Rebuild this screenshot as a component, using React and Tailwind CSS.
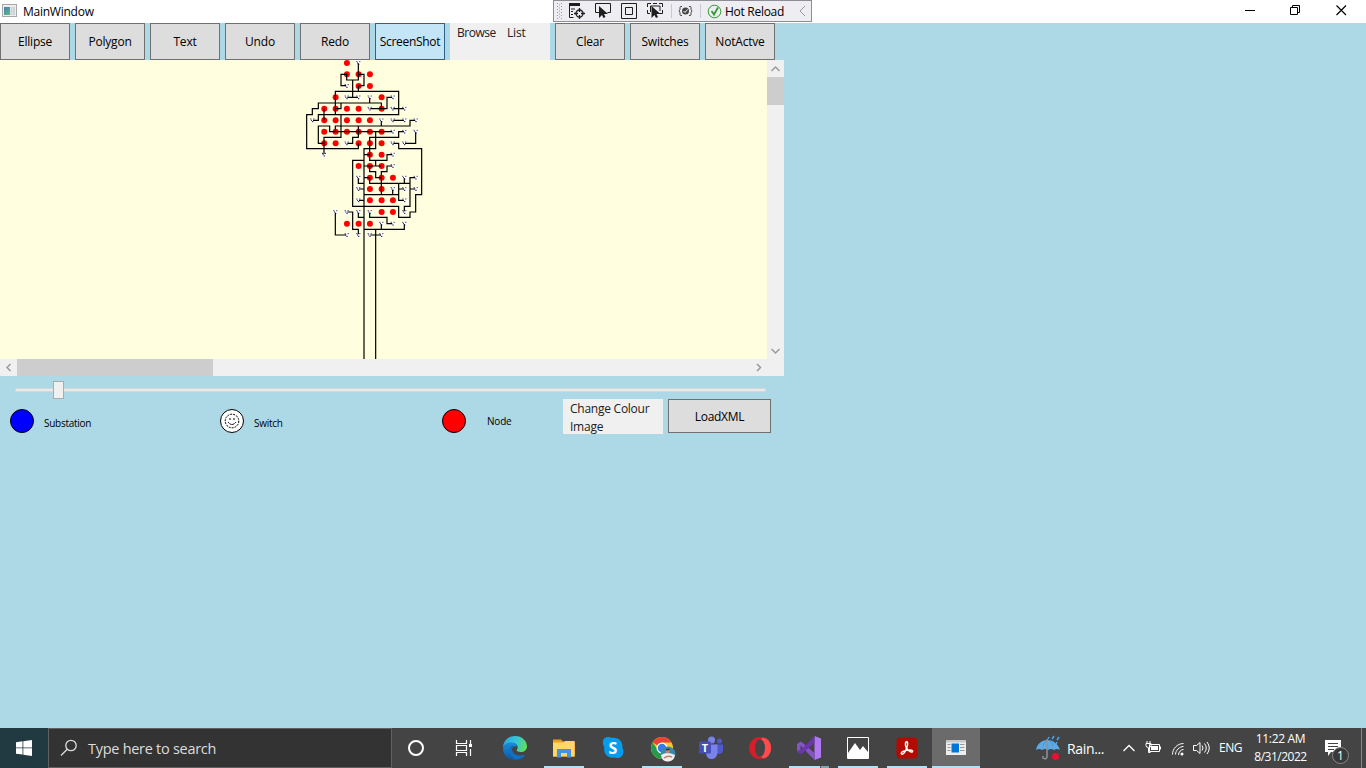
import React from "react";

const nodeRows = [
  [15, [155]],
  [49, [155, 190, 224]],
  [84, [190, 224]],
  [118, [121, 259]],
  [152, [87, 121, 155, 190, 259]],
  [187, [87, 121, 155, 190, 224]],
  [221, [87, 121, 155, 190, 224, 259]],
  [256, [87, 121, 190, 224, 259]],
  [290, [224, 259]],
  [324, [190, 224, 259]],
  [359, [224, 259, 293]],
  [393, [224, 259]],
  [427, [224, 259, 293]],
  [462, [259, 293]],
  [497, [155, 190, 224]],
];

const terminals = [
  [190, 15], [155, 84], [155, 118], [190, 118], [224, 118], [293, 118],
  [224, 152], [293, 152], [328, 152], [52, 187], [259, 187], [293, 187],
  [328, 187], [362, 187], [293, 221], [328, 221], [362, 221], [155, 256],
  [293, 256], [328, 256], [87, 290], [293, 290], [293, 324], [190, 359],
  [328, 359], [362, 359], [190, 393], [293, 393], [328, 393], [362, 393],
  [190, 427], [328, 427], [121, 462], [155, 462], [190, 462], [224, 462],
  [328, 462], [259, 497], [293, 497], [328, 497], [155, 531], [190, 531],
  [224, 531], [259, 531],
];

const wires = [
  "M190 16V66H155V49H138V83H153", "M190 49H207V83H190", "M173 66V118M157 118H188",
  "M190 84V100", "M121 170V100H311V170H70V187H54", "M224 120V135H70V152H52V170H35V272H190V256",
  "M121 152H138V135H259V152", "M87 152V187", "M226 152H276V118H291", "M295 152H326",
  "M295 187H326", "M360 187H345V204H121V221", "M259 189V204",
  "M87 256H70V204H104V221H291", "M138 170V238H87V288", "M190 204V238H173V256H157",
  "M326 221H311V238H224V290", "M362 223V256H330",
  "M295 256H311V272H380V410H362V462H345V478H311V445H173V307H207",
  "M242 221V272H207V903", "M207 290H224V307H242V324", "M291 290H276V307H242",
  "M207 324H259", "M224 324V341H242V359H259M291 324H276V341H259V410H293V395",
  "M190 361V376H207M207 359H224V376H345",
  "M328 361V376M360 359H345V393H360", "M345 376V445H328V460",
  "M311 376V427H326M311 393H326", "M207 410H311", "M192 393H207M192 427H207",
  "M121 464V531H153", "M157 462H173V514H190V529", "M190 464V478H207",
  "M224 464V478H276V497H291", "M207 514H328V499M259 499V514M242 514V903", "M226 531H257",
];

function Diagram() {
  return (
    <svg width="767" height="299" viewBox="0 60 767 299" className="block">
      <g transform="translate(295 58) scale(0.33333)">
        {terminals.map(([x, y]) => (
          <g key={`${x}-${y}`}>
            <circle cx={x} cy={y} r="8" fill="#fff" />
            <path d={`M${x - 6} ${y - 4}h3M${x + 3} ${y - 4}h3M${x - 4} ${y}h3M${x - 1} ${y + 4}h4`} stroke="#101030" strokeWidth="3" />
          </g>
        ))}
        {nodeRows.map(([y, xs]) => xs.map((x) => <circle key={`${x}-${y}`} cx={x + 0.8} cy={y} r="9" fill="#f00" />))}
        <path d={wires.join("")} fill="none" stroke="#000" strokeWidth="3.6" />
      </g>
    </svg>
  );
}

function Button({ children, active = false }) {
  return (
    <div
      className={`flex h-[37px] w-[70px] shrink-0 items-center justify-center border pt-px whitespace-nowrap ${
        active ? "border-[#2c628b] bg-[#c4e5f6] tracking-[-0.3px]" : "border-[#707070] bg-[#ddd]"
      }`}
    >
      {children}
    </div>
  );
}

function Chevron({ d }) {
  return (
    <svg width="17" height="17" viewBox="0 0 17 17" fill="none" stroke="#9a9a9a" strokeWidth="1.5" className="shrink-0">
      <path d={d} />
    </svg>
  );
}

function DebugBar() {
  return (
    <div className="flex h-[22px] w-[259px] shrink-0 items-center border border-[#8e8c94] bg-[#eeedf2]">
      <svg width="170" height="20" viewBox="554 1 170 20" fill="none" stroke="#1e1e1e" className="shrink-0">
        <path d="M557.5 3v17M561.5 3v17" stroke="#999" strokeDasharray="1 2" />
        <path d="M559.5 4.5v15" stroke="#999" strokeDasharray="1 2" />
        <path d="M569 3h11v3h-11z" fill="#1e1e1e" stroke="none" />
        <path d="M569.5 5v12.5h4M571 9h4M571 11.5h2M571 14.5h2" />
        <circle cx="579.5" cy="13.5" r="3.5" strokeWidth="1.3" />
        <path d="M579.5 8v4M579.5 15v4M574 13.5h4M581 13.5h4" strokeWidth="1.3" />
        <path d="M599 12.5h-3.500v-9h15v9h-3" />
        <path d="M599 6v12l3-3 1.500 3 2-1-1.500-3h4z" fill="#1e1e1e" stroke="none" />
        <path d="M621.500 3.500h15v15h-15zM625.500 7.500h7v7h-7z" />
        <path d="M647.500 7V3.500H651M659 3.500h3.500V7M647.500 10v3.500H650M662.500 10v3.500H659M650.500 12V6h9.500v5M653 3.500h4" />
        <path d="M651.500 6v12l3-3 1.500 3 2-1-1.500-3h4z" fill="#1e1e1e" stroke="none" />
        <path d="M671.500 4v14M700.500 4v14" stroke="#c7c8d8" />
        <path d="M682 6.500h-1q-1 0-1 1v2l-1 1.500 1 1.500v2q0 1 1 1h1M689 6.500h1q1 0 1 1v2l1 1.500-1 1.500v2q0 1-1 1h-1" stroke="#444" />
        <circle cx="685.500" cy="11" r="3.500" fill="#444" stroke="none" />
        <path d="M683.500 11l1.500 1.500 2.500-3" stroke="#fff" />
        <circle cx="714.500" cy="11.500" r="6.300" stroke="#339933" />
        <path d="M711.500 11l2.500 3.500 4-7" stroke="#339933" strokeWidth="1.800" />
      </svg>
      <span className="mt-[2px] ml-[1px] w-[60px] whitespace-nowrap text-[12px] tracking-[-0.28px]">Hot Reload</span>
      <svg width="10" height="12" viewBox="0 0 10 12" fill="none" stroke="#999" className="ml-[13px]">
        <path d="M7 1L2 6l5 5" />
      </svg>
    </div>
  );
}

function TitleBar() {
  return (
    <header className="flex h-[23px] bg-white text-[12px]">
      <svg width="16" height="16" viewBox="0 0 16 16" className="mt-[3px] ml-[2px] shrink-0">
        <defs>
          <linearGradient id="win" x2="0.700" y2="1">
            <stop stopColor="#4b7fb0" />
            <stop offset="1" stopColor="#55b58c" />
          </linearGradient>
        </defs>
        <rect x="0.500" y="1.500" width="14" height="12" fill="#eee" stroke="#a8a8a8" />
        <rect x="2" y="4" width="6" height="8" fill="url(#win)" />
        <path d="M9.500 4v8M12 4v8" stroke="#ccd3d8" strokeWidth="2" />
      </svg>
      <span className="mt-[4px] ml-[5px] w-[530px] tracking-[-0.25px]">MainWindow</span>
      <DebugBar />
      <svg width="554" height="22" viewBox="812 0 554 22" fill="none" stroke="#000" className="shrink-0">
        <path d="M1245 10.500h10" />
        <path d="M1290.500 7.500h7v7h-7zM1292.500 7V5.500h7v7H1298" />
        <path d="M1336.500 5.500l9.500 9.500M1346 5.500l-9.500 9.500" strokeWidth="1.200" />
      </svg>
    </header>
  );
}

function TaskSlot({ children, width, bar }) {
  return (
    <div className={`flex h-10 shrink-0 flex-col items-center ${width} ${bar === "active" ? "bg-[#6b6b6b]" : ""}`}>
      <div className="flex h-[38px] items-center">{children}</div>
      {bar && (
        <div className={`flex h-[2px] justify-end bg-[#aee2fb] ${bar === "active" ? "w-12" : "w-10"}`}>
          {bar === "stacked" && <div className="w-[9px] border-l border-[#555] bg-[#82a6b8]" />}
        </div>
      )}
    </div>
  );
}

function Icon({ children }) {
  return (
    <svg width="24" height="24" viewBox="0 0 24 24" fill="none" className="mt-[2px]">
      {children}
    </svg>
  );
}

function Taskbar() {
  return (
    <footer className="flex h-10 bg-[#444] font-['Open_Sans',sans-serif] text-white">
      <div className="flex w-12 shrink-0 items-center justify-center bg-[#213a42]">
        <svg width="16" height="16" viewBox="0 0 16 16" fill="#fff">
          <path d="M0 2.200L6.500 1.300V7.500H0zM7.300 1.200L16 0v7.500H7.300zM0 8.300h6.500v6.300L0 13.700zM7.300 8.300H16V16l-8.700-1.300z" />
        </svg>
      </div>
      <div className="flex w-[344px] shrink-0 items-center border border-[#606060] bg-[#333]">
        <svg width="18" height="18" viewBox="0 0 18 18" fill="none" stroke="#ddd" strokeWidth="1.300" className="ml-[11px]">
          <circle cx="11" cy="6.500" r="5.200" />
          <path d="M7.200 10.300L1 16.500" />
        </svg>
        <span className="mt-[2px] ml-[10px] whitespace-nowrap text-[14.500px] tracking-[-0.28px] text-[#ddd]">Type here to search</span>
      </div>
      <TaskSlot width="w-12">
        <Icon><circle cx="12" cy="12" r="7" stroke="#fff" strokeWidth="2" /></Icon>
      </TaskSlot>
      <TaskSlot width="w-12">
        <Icon>
          <path d="M4.500 4v3.500h10V4M4.500 20v-3.500h10V20M4.500 9.500h10v5h-10zM18.500 4v4M18.500 13v7" stroke="#fff" strokeWidth="1.200" />
          <path d="M17 8h3v3h-3z" fill="#fff" />
        </Icon>
      </TaskSlot>
      <TaskSlot width="w-[54px]">
        <Icon>
          <defs>
            <linearGradient id="edge" x1="0" y1="0.200" x2="1" y2="0.400">
              <stop stopColor="#2aa5e4" /><stop offset="0.550" stopColor="#35c5d8" /><stop offset="1" stopColor="#5de05c" />
            </linearGradient>
            <linearGradient id="edgeb" x2="0" y2="1">
              <stop stopColor="#198ddd" /><stop offset="1" stopColor="#0d59a7" />
            </linearGradient>
          </defs>
          <path d="M0 12C0 5 5 0 12 0s12 5 12 10.500c0 3.500-3 5.500-6 5.500-3.500 0-5-1.200-4-2.500 1.800-3 0-6.500-5-6.500C4 7 1 9 0 12z" fill="url(#edge)" />
          <path d="M0 12c1-4 5-6 9-5.500 3 .3 5 2 5.500 4-4-1-6 1-5.500 4 .5 4 6 6 11 4.500l2 .500c-2 3-6 4.500-10 4.500C5 24 0 19 0 12z" fill="url(#edgeb)" />
          <path d="M7.500 10.500c-3 6 1 12 6.500 13 3-.3 6-2 8-4.500-5 2-12 0-13-5 0-1.500-.5-2.500 2-4-1-.5-2.500-.3-3.500.5z" fill="#1270bf" />
        </Icon>
      </TaskSlot>
      <TaskSlot width="w-[44px]" bar="open">
        <Icon>
          <path d="M1 3.500h8l2 2h12v15H1z" fill="#e8a312" />
          <path d="M1 6.500h10l2-1.500h9.500v15.500H1z" fill="#ffd668" />
          <path d="M5 21.500V13h14v8.500h-4V17H9v4.500z" fill="#4194dd" />
        </Icon>
      </TaskSlot>
      <TaskSlot width="w-[54px]">
        <Icon>
          <path d="M7 1c2 0 3 .5 4 1 7-1 11 4 10.500 10 1 1.500 1 3 .8 4.500-.5 5-5 6.500-9 5-7 1-11-4-10-10C.5 6 2 1 7 1z" fill="#079ce9" />
          <text x="12" y="17.500" textAnchor="middle" fill="#fff" fontFamily="Open Sans" fontSize="16" fontWeight="700">S</text>
        </Icon>
      </TaskSlot>
      <TaskSlot width="w-[44px]" bar="open">
        <svg width="26" height="26" viewBox="0 0 26 26" className="mt-[4px] ml-[1px]">
          <circle cx="12" cy="12" r="11" fill="#f8c922" />
          <path d="M12 12L2.500 6.500A11 11 0 0 1 21.500 6.500H12z" fill="#ea4335" />
          <path d="M2.500 6.500A11 11 0 0 0 12 23l4-8-8-1z" fill="#249b4c" />
          <circle cx="12" cy="12" r="5.500" fill="#fff" /><circle cx="12" cy="12" r="4.300" fill="#3979e8" />
          <circle cx="18" cy="18" r="7.500" fill="#3c86a8" />
          <path d="M11 19q6-4 14 0-1 6-7 6.500T11 19z" fill="#eee" /><circle cx="17.500" cy="15" r="2.200" fill="#b88974" />
          <path d="M15.300 14.500q1-3 4.500-1.500v1z" fill="#30302e" />
          <path d="M14 22q4-3 8-1" stroke="#bb8067" strokeWidth="1.500" fill="none" />
        </svg>
      </TaskSlot>
      <TaskSlot width="w-[54px]">
        <Icon>
          <circle cx="12.500" cy="4" r="3.500" fill="#7b83eb" /><circle cx="20.500" cy="5" r="2.600" fill="#5059c9" />
          <path d="M15 8.500h9V15q-1 3-4 3t-5-3z" fill="#5059c9" /><path d="M7 8.500h11.500V17q-1 6-6 6t-5.500-6z" fill="#7b83eb" />
          <rect x="0" y="5.500" width="12" height="12" rx="1" fill="#464eb8" />
          <text x="6" y="15.500" textAnchor="middle" fill="#fff" fontFamily="Open Sans" fontSize="11" fontWeight="700">T</text>
        </Icon>
      </TaskSlot>
      <TaskSlot width="w-[44px]">
        <Icon>
          <ellipse cx="12" cy="12" rx="11" ry="11" fill="#d51e2a" />
          <path d="M15 1.500c10 1 11 18 1 21-4-1-6-4-6-10s2-9 5-11z" fill="#ff4b4b" />
          <ellipse cx="12" cy="12" rx="5" ry="8.800" fill="#444" />
        </Icon>
      </TaskSlot>
      <TaskSlot width="w-[54px]" bar="stacked">
        <Icon>
          <path d="M17.500 0L24 2.500v19L17.500 24z" fill="#b179f1" />
          <path d="M17.500 24v-7L4 5.500 0 8v8l3.500-1.500V9.500z" fill="#8654c5" />
          <path d="M17.500 0v7L4 18.500 0 16l1-2 2.500 .5z" fill="#6a35ad" />
        </Icon>
      </TaskSlot>
      <TaskSlot width="w-[44px]" bar="open">
        <Icon>
          <path d="M1.500 1.500h21v21h-21z" stroke="#fff" />
          <path d="M2 17l7-10 5 7 3-4 5 6v6H2z" fill="#fff" />
        </Icon>
      </TaskSlot>
      <TaskSlot width="w-[54px]" bar="open">
        <Icon>
          <rect x="1.500" y="1.500" width="21" height="21" rx="4" fill="#b30b00" />
          <path d="M11 6c2-1 2 2 1 5-1.500 5-4 8-5.500 7-1.500-1.500 3-4 8-4 4-.3 4 2.500 1.500 2-3.500-.8-7-7-5-10z" stroke="#fff" strokeWidth="1.400" />
        </Icon>
      </TaskSlot>
      <div className="-ml-[2px] shrink-0">
        <TaskSlot width="w-12" bar="active">
          <Icon>
            <path d="M2 4h20v15H2z" fill="#eee" /><path d="M2 4h20v2.500H2z" fill="#c8c8c8" />
            <path d="M7.500 7.500h7.500v9H7.500z" fill="#0076d7" />
            <path d="M3.500 8.500h3M3.500 11.500h3M3.500 14.500h3M16 8.500h4.500M16 11.500h4.500M16 14.500h4.500" stroke="#999" />
          </Icon>
        </TaskSlot>
      </div>
      <div className="ml-[55px] flex h-10 w-[78px] shrink-0 items-center">
        <svg width="26" height="26" viewBox="0 0 26 26" fill="none">
          <path d="M1 15C2 8 8 5 12.500 5S23 8 25 15q-3-2-6 0-3-2-6 0-3-2-6 0-3-2-6 0z" fill="#5ea8e4" />
          <path d="M7 15q1-8 5.500-10Q8 8 7 15zM19 15q-1-8-5.500-10Q18 8 19 15z" fill="#2b6aa9" />
          <path d="M12 4v18q-1 3-4 1v-2" stroke="#8b929b" strokeWidth="1.500" />
          <path d="M14 2l-1 2M19 1l-2 3M24 2l-2 3M22 7l-1 2" stroke="#4ba6ef" strokeWidth="1.500" />
          <circle cx="20.500" cy="21.500" r="3.500" fill="#e81135" />
        </svg>
        <span className="mt-[2px] ml-[6px] whitespace-nowrap text-[14px] tracking-[-0.35px]">Rain...</span>
      </div>
      <svg width="102" height="40" viewBox="1113 728 102 40" fill="none" stroke="#fff" className="shrink-0">
        <path d="M1123.500 751l5.500-5.500 5.500 5.500" strokeWidth="1.300" />
        <path d="M1149.500 744.500h10v7h-10zM1160.500 746.500v3M1146 743.500h5v2q0 2-2.500 2t-2.500-2zM1147 741v2M1150 741v2M1148.500 748v4.500h2" />
        <path d="M1151 746h7v4h-7z" fill="#fff" stroke="none" />
        <path d="M1172.500 754.500c0-6 5-11 11-11M1175.500 754.500c0-4 4-8 8-8M1178.500 755c0-3 2.500-5.500 5-5.500" />
        <circle cx="1182" cy="754" r="1.500" fill="#fff" stroke="none" />
        <path d="M1193.500 745.500h3l3.500-3v11l-3.500-3h-3zM1202 745.500q2 2.500 0 5M1204.500 743.500q3.500 4.500 0 9M1207 742q4.500 6 0 12" />
      </svg>
      <span className="mt-[11px] w-[30px] shrink-0 pl-1 text-[12px] leading-[18px] tracking-[-0.45px]">ENG</span>
      <div className="w-[72px] shrink-0 text-center text-[12px] leading-[18px]">
        <div className="mt-[2px] -ml-[1px] tracking-[-0.35px]">11:22 AM</div>
        <div className="-ml-[1px] tracking-[-0.5px]">8/31/2022</div>
      </div>
      <svg width="49" height="40" viewBox="1317 728 49 40" className="shrink-0">
        <path d="M1325 740h16v12h-10l-3 4v-4h-3z" fill="#fff" />
        <path d="M1328 743.500h10M1328 746.500h10M1328 749.500h6" stroke="#444" />
        <circle cx="1340.500" cy="755.500" r="8" fill="#393939" stroke="#888" />
        <text x="1340.500" y="760" textAnchor="middle" fontFamily="Open Sans" fontSize="12" fill="#fff">1</text>
        <path d="M1361.500 728v40" stroke="#888" />
      </svg>
    </footer>
  );
}

export default function App() {
  return (
    <div className="flex h-[768px] w-[1366px] flex-col overflow-hidden bg-[#add8e6] font-['Open_Sans',sans-serif] text-[12px] leading-4 text-black">
      <TitleBar />
      <main className="w-[784px] grow">
        <nav className="flex gap-[5px] tracking-[-0.2px]">
          <Button>Ellipse</Button><Button>Polygon</Button><Button>Text</Button><Button>Undo</Button><Button>Redo</Button>
          <Button active>ScreenShot</Button>
          <div className="flex w-[100px] gap-3 bg-[#f0f0f0] pt-[2px] pl-[7px] text-[#212121]">
            <span className="w-[38px] tracking-[-0.5px]">Browse</span><span>List</span>
          </div>
          <Button>Clear</Button><Button>Switches</Button><Button>NotActve</Button>
        </nav>
        <section className="flex h-[299px] bg-[#ffffe0]">
          <Diagram />
          <div className="flex w-[17px] flex-col bg-[#f0f0f0]">
            <Chevron d="M4.500 11L8.500 7l4 4" />
            <div className="mb-auto h-7 bg-[#cdcdcd]" />
            <Chevron d="M4.500 7l4 4 4-4" />
          </div>
        </section>
        <div className="flex h-[17px] bg-[#f0f0f0] pr-[17px]">
          <Chevron d="M10.500 5L7 8.500l3.500 3.500" />
          <div className="mr-auto w-[196px] bg-[#cdcdcd]" />
          <Chevron d="M7 5l3.500 3.500L7 12" />
        </div>
        <div className="flex h-[23px] items-center pt-[5px] pl-[15px]">
          <div className="h-1 w-[38px] border border-r-0 border-[#d6d6d6] bg-[#e7eaea]" />
          <div className="h-[18px] w-[11px] border border-[#acacac] bg-[#f0f0f0]" />
          <div className="h-1 w-[702px] border border-l-0 border-[#d6d6d6] bg-[#e7eaea]" />
        </div>
        <section className="flex h-[44px] text-[10px]">
          <div className="flex w-[210px] items-center pl-[9px]">
            <svg width="26" height="26" viewBox="0 0 26 26"><circle cx="13" cy="13" r="11.500" fill="#00f" stroke="#000" /></svg>
            <span className="mt-[4px] ml-[9px] tracking-[-0.28px]">Substation</span>
          </div>
          <div className="flex w-[222px] items-center pl-[9px]">
            <svg width="26" height="26" viewBox="0 0 26 26" fill="none" stroke="#000">
              <circle cx="13" cy="13" r="11.500" fill="#fff" />
              <circle cx="13" cy="13" r="6.800" strokeDasharray="2 1" />
              <path d="M11 10v2M15 10v2" /><path d="M9 14q4 5 8 0" strokeDasharray="2 .5" />
            </svg>
            <span className="mt-[4px] ml-[9px] tracking-[-0.25px]">Switch</span>
          </div>
          <div className="flex w-[131px] items-center pl-[9px]">
            <svg width="26" height="26" viewBox="0 0 26 26"><circle cx="13" cy="13" r="11.500" fill="#f00" stroke="#000" /></svg>
            <span className="ml-[20px] tracking-[-0.2px]">Node</span>
          </div>
          <div className="h-[35px] w-[100px] bg-[#f0f0f0] pt-[1px] pl-[7px] text-[12px] leading-[18px] whitespace-nowrap text-[#212121]">
            <div className="tracking-[-0.25px]">Change Colour</div><div className="tracking-[-0.25px]">Image</div>
          </div>
          <div className="ml-[5px] flex h-[34px] w-[103px] items-center justify-center border border-[#707070] bg-[#ddd] pt-[2px] text-[12px] tracking-[-0.3px]">LoadXML</div>
        </section>
      </main>
      <Taskbar />
    </div>
  );
}
